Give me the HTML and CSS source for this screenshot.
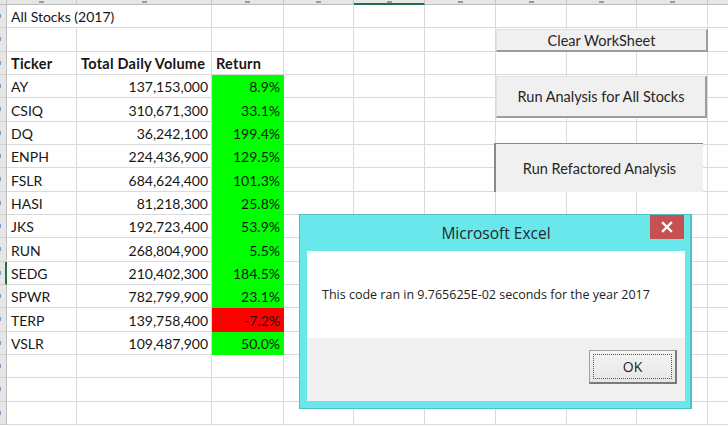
FILE: index.html
```html
<!DOCTYPE html>
<html>
<head>
<meta charset="utf-8">
<link rel="stylesheet" href="styles.css">
</head>
<body>
<div class="sheet">
  <div class="corner"></div>
  <div class="ch"></div><div class="ch"></div><div class="ch"></div><div class="ch"></div><div class="ch sel"></div><div class="ch"></div><div class="ch"></div><div class="ch"></div><div class="ch"></div><div class="ch"></div>

  <div class="rh"></div><div class="c ov">All Stocks (2017)</div><div class="c"></div><div class="c"></div><div class="c"></div><div class="c"></div><div class="c"></div><div class="c"></div><div class="c"></div><div class="c"></div><div class="c"></div>
  <div class="rh"></div><div class="c"></div><div class="c"></div><div class="c"></div><div class="c"></div><div class="c"></div><div class="c"></div><div class="c"></div><div class="c"></div><div class="c"></div><div class="c"></div>
  <div class="rh"></div><div class="c bold">Ticker</div><div class="c bold">Total Daily Volume</div><div class="c bold">Return</div><div class="c"></div><div class="c"></div><div class="c"></div><div class="c"></div><div class="c"></div><div class="c"></div><div class="c"></div>

  <div class="rh"></div><div class="c">AY</div><div class="c r">137,153,000</div><div class="c r g">8.9%</div><div class="c"></div><div class="c"></div><div class="c"></div><div class="c"></div><div class="c"></div><div class="c"></div><div class="c"></div>
  <div class="rh"></div><div class="c">CSIQ</div><div class="c r">310,671,300</div><div class="c r g">33.1%</div><div class="c"></div><div class="c"></div><div class="c"></div><div class="c"></div><div class="c"></div><div class="c"></div><div class="c"></div>
  <div class="rh"></div><div class="c">DQ</div><div class="c r">36,242,100</div><div class="c r g">199.4%</div><div class="c"></div><div class="c"></div><div class="c"></div><div class="c"></div><div class="c"></div><div class="c"></div><div class="c"></div>
  <div class="rh"></div><div class="c">ENPH</div><div class="c r">224,436,900</div><div class="c r g">129.5%</div><div class="c"></div><div class="c"></div><div class="c"></div><div class="c"></div><div class="c"></div><div class="c"></div><div class="c"></div>
  <div class="rh"></div><div class="c">FSLR</div><div class="c r">684,624,400</div><div class="c r g">101.3%</div><div class="c"></div><div class="c"></div><div class="c"></div><div class="c"></div><div class="c"></div><div class="c"></div><div class="c"></div>
  <div class="rh"></div><div class="c">HASI</div><div class="c r">81,218,300</div><div class="c r g">25.8%</div><div class="c"></div><div class="c"></div><div class="c"></div><div class="c"></div><div class="c"></div><div class="c"></div><div class="c"></div>
  <div class="rh"></div><div class="c">JKS</div><div class="c r">192,723,400</div><div class="c r g">53.9%</div><div class="c"></div><div class="c"></div><div class="c"></div><div class="c"></div><div class="c"></div><div class="c"></div><div class="c"></div>
  <div class="rh"></div><div class="c">RUN</div><div class="c r">268,804,900</div><div class="c r g">5.5%</div><div class="c"></div><div class="c"></div><div class="c"></div><div class="c"></div><div class="c"></div><div class="c"></div><div class="c"></div>
  <div class="rh sel"></div><div class="c">SEDG</div><div class="c r">210,402,300</div><div class="c r g">184.5%</div><div class="c"></div><div class="c"></div><div class="c"></div><div class="c"></div><div class="c"></div><div class="c"></div><div class="c"></div>
  <div class="rh"></div><div class="c">SPWR</div><div class="c r">782,799,900</div><div class="c r g">23.1%</div><div class="c"></div><div class="c"></div><div class="c"></div><div class="c"></div><div class="c"></div><div class="c"></div><div class="c"></div>
  <div class="rh"></div><div class="c">TERP</div><div class="c r">139,758,400</div><div class="c r red">-7.2%</div><div class="c"></div><div class="c"></div><div class="c"></div><div class="c"></div><div class="c"></div><div class="c"></div><div class="c"></div>
  <div class="rh"></div><div class="c">VSLR</div><div class="c r">109,487,900</div><div class="c r g">50.0%</div><div class="c"></div><div class="c"></div><div class="c"></div><div class="c"></div><div class="c"></div><div class="c"></div><div class="c"></div>

  <div class="rh"></div><div class="c"></div><div class="c"></div><div class="c"></div><div class="c"></div><div class="c"></div><div class="c"></div><div class="c"></div><div class="c"></div><div class="c"></div><div class="c"></div>
  <div class="rh"></div><div class="c"></div><div class="c"></div><div class="c"></div><div class="c"></div><div class="c"></div><div class="c"></div><div class="c"></div><div class="c"></div><div class="c"></div><div class="c"></div>
  <div class="rh"></div><div class="c"></div><div class="c"></div><div class="c"></div><div class="c"></div><div class="c"></div><div class="c"></div><div class="c"></div><div class="c"></div><div class="c"></div><div class="c"></div>

  <div class="btn raised b1">Clear WorkSheet</div>
  <div class="btn raised b2">Run Analysis for All Stocks</div>
  <div class="btn pressed b3">Run Refactored Analysis</div>

  <div class="dlg">
    <div class="dlg-title">Microsoft Excel</div>
    <div class="dlg-close"><svg width="12" height="12" viewBox="0 0 12 12"><path d="M2 2 L10 10 M10 2 L2 10" stroke="#fff" stroke-width="2.4" stroke-linecap="square"/></svg></div>
    <div class="dlg-body">
      <div class="msg">This code ran in 9.765625E-02 seconds for the year 2017</div>
      <div class="foot"><div class="ok">OK</div></div>
    </div>
  </div>
</div>
</body>
</html>
```

FILE: styles.css
```css
* { box-sizing: border-box; margin: 0; padding: 0; }
html, body { width: 728px; height: 426px; overflow: hidden; background: #fff; }
body { font-family: Lato, "Liberation Sans", sans-serif; color: #161616; }

.sheet {
  position: relative;
  display: grid;
  grid-template-columns: 7px 70px 135px 72px 70px 71px 71px 71px 70px 71px 71px;
  grid-template-rows: 5px repeat(18, 23.333px);
  width: 728px;
  height: 426px;
  overflow: hidden;
}

.corner { background: #e6e6e6; border-right: 1px solid #c4c4c4; border-bottom: 1px solid #bdbdbd; }
.ch { background: #e6e6e6; border-right: 1px solid #c8c8c8; border-bottom: 1px solid #bdbdbd; display: flex; justify-content: center; align-items: flex-start; }
.ch::after { content: ""; width: 5px; height: 2px; margin-top: 1px; background: #9a9a9a; }
.ch.sel { border-bottom: 2px solid #217346; }

.rh { background: #e6e6e6; border-right: 1px solid #bdbdbd; border-bottom: 1px solid #cfcfcf; display: flex; align-items: center; }
.rh::after { content: ""; width: 1px; height: 4px; background: #7d9cc4; }
.rh.sel { border-right: 2px solid #217346; }

.c {
  border-right: 1px solid #dadada;
  border-bottom: 1px solid #dadada;
  display: flex;
  align-items: flex-end;
  padding: 0 3px 2px 4px;
  font-size: 14px;
  line-height: 17px;
  white-space: nowrap;
  min-width: 0;
}
.c.r { justify-content: flex-end; }
.c.bold { font-weight: 700; font-size: 14.5px; letter-spacing: 0.25px; }
.c.ov { border-right-color: transparent; overflow: visible; }
.c.g { background: #00ff00; border-color: #00ff00; }
.c.red { background: #ff0000; border-color: #ff0000; }

.btn {
  position: absolute;
  background: #f0f0f0;
  display: flex;
  align-items: center;
  justify-content: center;
  font-size: 14.5px;
  color: #262626;
  white-space: nowrap;
}
.raised { border-top: 1px solid #e2e2e2; border-left: 1px solid #e2e2e2; border-right: 2px solid #9c9c9c; border-bottom: 2px solid #9c9c9c; }
.pressed { border-top: 1px solid #8a8a8a; border-left: 2px solid #8a8a8a; }
.b1 { left: 496px; top: 29px; width: 212px; height: 23px; }
.b2 { left: 496px; top: 76px; width: 211px; height: 42px; }
.b3 { left: 494px; top: 143px; width: 209px; height: 49px; }

.dlg {
  position: absolute;
  left: 299px;
  top: 214px;
  width: 393px;
  height: 195px;
  background: #6ae7eb;
  border: 1px solid #52bfc3;
  border-right-width: 2px;
  padding: 0 5px 7px 7px;
  display: flex;
  flex-direction: column;
  font-family: "Open Sans", "Noto Sans", sans-serif;
}
.dlg-title {
  height: 36px;
  display: flex;
  align-items: center;
  justify-content: center;
  font-size: 15.5px;
  color: #1d2b2c;
}
.dlg-close {
  position: absolute;
  left: 350px;
  top: 0;
  width: 34px;
  height: 24px;
  background: #c75050;
  display: flex;
  align-items: center;
  justify-content: center;
}
.dlg-body { flex: 1; display: flex; flex-direction: column; background: #fff; }
.msg { height: 87px; display: flex; align-items: center; padding-left: 15px; font-size: 12.5px; color: #222; white-space: nowrap; }
.foot { flex: 1; background: #f0f0f0; display: flex; justify-content: flex-end; align-items: flex-start; padding: 12px 8px 0 0; }
.ok {
  position: relative;
  width: 88px;
  height: 34px;
  border: 1px solid #a0a0a0;
  border-right: 2px solid #7a7a7a;
  border-bottom: 2px solid #7a7a7a;
  background: linear-gradient(#f4f4f4, #e6e6e6);
  display: flex;
  align-items: center;
  justify-content: center;
  font-size: 14px;
  color: #222;
}
.ok::before { content: ""; position: absolute; inset: 3px; border: 1px dotted #555; }
```
